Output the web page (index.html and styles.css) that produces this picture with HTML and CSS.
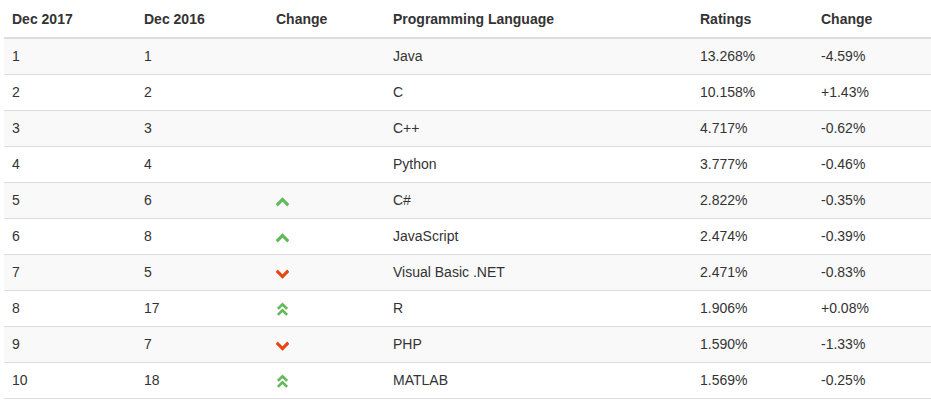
FILE: index.html
```html
<!DOCTYPE html>
<html>
<head>
<meta charset="utf-8">
<link rel="stylesheet" href="styles.css">
</head>
<body>
<table class="tbl">
  <colgroup>
    <col class="c1"><col class="c2"><col class="c3"><col class="c4"><col class="c5"><col class="c6">
  </colgroup>
  <thead>
    <tr><th>Dec 2017</th><th>Dec 2016</th><th>Change</th><th>Programming Language</th><th>Ratings</th><th>Change</th></tr>
  </thead>
  <tbody>
    <tr><td>1</td><td>1</td><td></td><td>Java</td><td>13.268%</td><td>-4.59%</td></tr>
    <tr><td>2</td><td>2</td><td></td><td>C</td><td>10.158%</td><td>+1.43%</td></tr>
    <tr><td>3</td><td>3</td><td></td><td>C++</td><td>4.717%</td><td>-0.62%</td></tr>
    <tr><td>4</td><td>4</td><td></td><td>Python</td><td>3.777%</td><td>-0.46%</td></tr>
    <tr><td>5</td><td>6</td><td><svg class="ic up" width="13" height="19" viewBox="0 0 13 19"><path d="M1.8 13.2 L6.5 8.5 L11.2 13.2"/></svg></td><td>C#</td><td>2.822%</td><td>-0.35%</td></tr>
    <tr><td>6</td><td>8</td><td><svg class="ic up" width="13" height="19" viewBox="0 0 13 19"><path d="M1.8 13.2 L6.5 8.5 L11.2 13.2"/></svg></td><td>JavaScript</td><td>2.474%</td><td>-0.39%</td></tr>
    <tr><td>7</td><td>5</td><td><svg class="ic down" width="13" height="19" viewBox="0 0 13 19"><path d="M1.8 8.8 L6.5 13.5 L11.2 8.8"/></svg></td><td>Visual Basic .NET</td><td>2.471%</td><td>-0.83%</td></tr>
    <tr><td>8</td><td>17</td><td><svg class="ic up2" width="13" height="19" viewBox="0 0 13 19"><path d="M2.8 9 L6.5 5.3 L10.2 9 M2.8 15 L6.5 11.3 L10.2 15"/></svg></td><td>R</td><td>1.906%</td><td>+0.08%</td></tr>
    <tr><td>9</td><td>7</td><td><svg class="ic down" width="13" height="19" viewBox="0 0 13 19"><path d="M1.8 8.8 L6.5 13.5 L11.2 8.8"/></svg></td><td>PHP</td><td>1.590%</td><td>-1.33%</td></tr>
    <tr><td>10</td><td>18</td><td><svg class="ic up2" width="13" height="19" viewBox="0 0 13 19"><path d="M2.8 9 L6.5 5.3 L10.2 9 M2.8 15 L6.5 11.3 L10.2 15"/></svg></td><td>MATLAB</td><td>1.569%</td><td>-0.25%</td></tr>
  </tbody>
</table>
</body>
</html>
```

FILE: styles.css
```css
html, body {
  margin: 0;
  padding: 0;
  background: #fff;
}
body {
  padding: 2px 0 0 4px;
  font-family: "Liberation Sans", Arial, sans-serif;
  font-size: 14px;
  line-height: 19px;
  color: #333;
}
.tbl {
  border-collapse: collapse;
  border-spacing: 0;
  width: 927px;
  table-layout: fixed;
}
.c1 { width: 132px; }
.c2 { width: 132px; }
.c3 { width: 117px; }
.c4 { width: 307px; }
.c5 { width: 121px; }
.c6 { width: 118px; }
.tbl th {
  text-align: left;
  font-weight: bold;
  padding: 8px 8px;
  border-bottom: 2px solid #ddd;
  vertical-align: bottom;
}
.tbl td {
  padding: 8px 8px;
  border-bottom: 1px solid #ddd;
  vertical-align: top;
}
.tbl tbody tr:nth-child(odd) td {
  background: #f9f9f9;
}
.ic {
  display: block;
  fill: none;
  stroke-width: 3.1;
  stroke-linecap: square;
  stroke-linejoin: miter;
}
.up2 { stroke-width: 2.6; }
.up, .up2 { stroke: #62b95c; }
.down { stroke: #e8450f; }
```
